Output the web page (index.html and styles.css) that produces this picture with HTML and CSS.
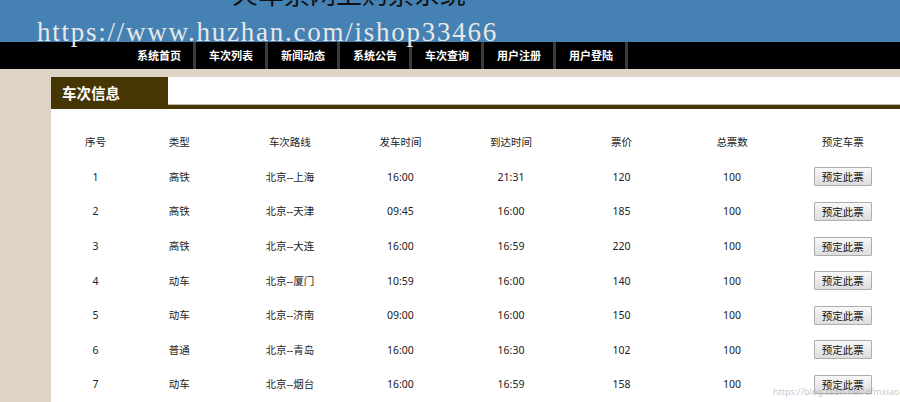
FILE: index.html
```html
<!DOCTYPE html>
<html lang="zh-CN">
<head>
<meta charset="utf-8">
<title>火车票网上购票系统</title>
<link rel="stylesheet" href="styles.css">
</head>
<body>
<div class="page">
  <header class="top">
    <h1 class="title">火车票网上购票系统</h1>
  </header>
  <nav class="nav">
    <ul class="menu">
      <li class="menu-item">系统首页</li>
      <li class="menu-item">车次列表</li>
      <li class="menu-item">新闻动态</li>
      <li class="menu-item">系统公告</li>
      <li class="menu-item">车次查询</li>
      <li class="menu-item">用户注册</li>
      <li class="menu-item">用户登陆</li>
    </ul>
  </nav>
  <div class="main">
    <section class="panel">
      <div class="panel-head">
        <div class="tab">车次信息</div>
        <div class="head-rest"></div>
      </div>
      <table class="grid">
        <colgroup>
          <col class="c-first">
          <col class="c"><col class="c"><col class="c"><col class="c"><col class="c"><col class="c"><col class="c">
        </colgroup>
        <thead>
          <tr><th>序号</th><th>类型</th><th>车次路线</th><th>发车时间</th><th>到达时间</th><th>票价</th><th>总票数</th><th>预定车票</th></tr>
        </thead>
        <tbody>
          <tr><td>1</td><td>高铁</td><td>北京--上海</td><td>16:00</td><td>21:31</td><td>120</td><td>100</td><td><button class="btn">预定此票</button></td></tr>
          <tr><td>2</td><td>高铁</td><td>北京--天津</td><td>09:45</td><td>16:00</td><td>185</td><td>100</td><td><button class="btn">预定此票</button></td></tr>
          <tr><td>3</td><td>高铁</td><td>北京--大连</td><td>16:00</td><td>16:59</td><td>220</td><td>100</td><td><button class="btn">预定此票</button></td></tr>
          <tr><td>4</td><td>动车</td><td>北京--厦门</td><td>10:59</td><td>16:00</td><td>140</td><td>100</td><td><button class="btn">预定此票</button></td></tr>
          <tr><td>5</td><td>动车</td><td>北京--济南</td><td>09:00</td><td>16:00</td><td>150</td><td>100</td><td><button class="btn">预定此票</button></td></tr>
          <tr><td>6</td><td>普通</td><td>北京--青岛</td><td>16:00</td><td>16:30</td><td>102</td><td>100</td><td><button class="btn">预定此票</button></td></tr>
          <tr><td>7</td><td>动车</td><td>北京--烟台</td><td>16:00</td><td>16:59</td><td>158</td><td>100</td><td><button class="btn">预定此票</button></td></tr>
        </tbody>
      </table>
    </section>
  </div>
  <div class="wm-site">https://www.huzhan.com/ishop33466</div>
  <div class="wm-blog">https://blog.csdn.net/dfmxiaomipengqq</div>
</div>
</body>
</html>
```
FILE: styles.css
```css
html, body {
  margin: 0;
  padding: 0;
}
body {
  background: #ddd4c5;
  font-family: "Noto Sans", "Noto Sans CJK SC", sans-serif;
  color: #222;
  overflow: hidden;
}
.page {
  position: relative;
  width: 900px;
  height: 402px;
  overflow: hidden;
}
.top {
  height: 42px;
  background: #4581b3;
  overflow: hidden;
}
.title {
  margin: -20px 0 0 232px;
  font-family: "Noto Sans CJK SC", sans-serif;
  font-size: 26px;
  line-height: 26px;
  font-weight: normal;
  color: #111;
  letter-spacing: 0;
}
.nav {
  height: 27px;
  background: #000;
}
.menu {
  list-style: none;
  margin: 0;
  padding: 0 0 0 124px;
  display: flex;
  height: 27px;
}
.menu-item {
  padding: 0 12px 0 13px;
  border-right: 3px solid #3a3a3a;
  color: #fff;
  font-family: "Noto Sans CJK SC", sans-serif;
  font-weight: bold;
  font-size: 11px;
  line-height: 27px;
  white-space: nowrap;
}
.main {
  padding: 8px 0 0 51px;
}
.panel {
  background: #fff;
  height: 400px;
  margin-right: -20px;
}
.panel-head {
  display: flex;
  height: 28px;
  border-bottom: 4px solid #453603;
}
.tab {
  width: 106px;
  padding-left: 11px;
  background: #453603;
  color: #fff;
  font-family: "Noto Sans CJK SC", sans-serif;
  font-weight: bold;
  font-size: 14.5px;
  line-height: 32px;
  height: 32px;
}
.head-rest {
  flex: 1;
  border-bottom: 1px solid #bdb6aa;
}
.grid {
  margin: 16px 0 0 16px;
  border-collapse: collapse;
  table-layout: fixed;
  width: 831px;
}
.c-first { width: 57px; }
.c { width: 110.5px; }
.grid th, .grid td {
  padding: 0;
  height: 34.6px;
  text-align: center;
  vertical-align: middle;
  font-size: 10.5px;
  line-height: 14px;
  font-weight: normal;
  color: #222;
}
.btn {
  width: 58px;
  height: 19px;
  padding: 0;
  border: 1px solid #adadad;
  border-radius: 1px;
  background: linear-gradient(#f7f7f7, #dedede);
  font-family: "Noto Sans CJK SC", sans-serif;
  font-size: 10.5px;
  line-height: 17px;
  color: #111;
}
.wm-site {
  position: absolute;
  left: 37px;
  top: 19px;
  font-family: "Liberation Serif", serif;
  font-size: 27px;
  line-height: 27px;
  letter-spacing: 1.75px;
  color: #e8e8e8;
  white-space: nowrap;
}
.wm-blog {
  position: absolute;
  left: 773px;
  top: 386px;
  font-family: "Noto Sans", sans-serif;
  font-size: 9px;
  line-height: 12px;
  color: rgba(160, 160, 160, 0.6);
  white-space: nowrap;
}
```
